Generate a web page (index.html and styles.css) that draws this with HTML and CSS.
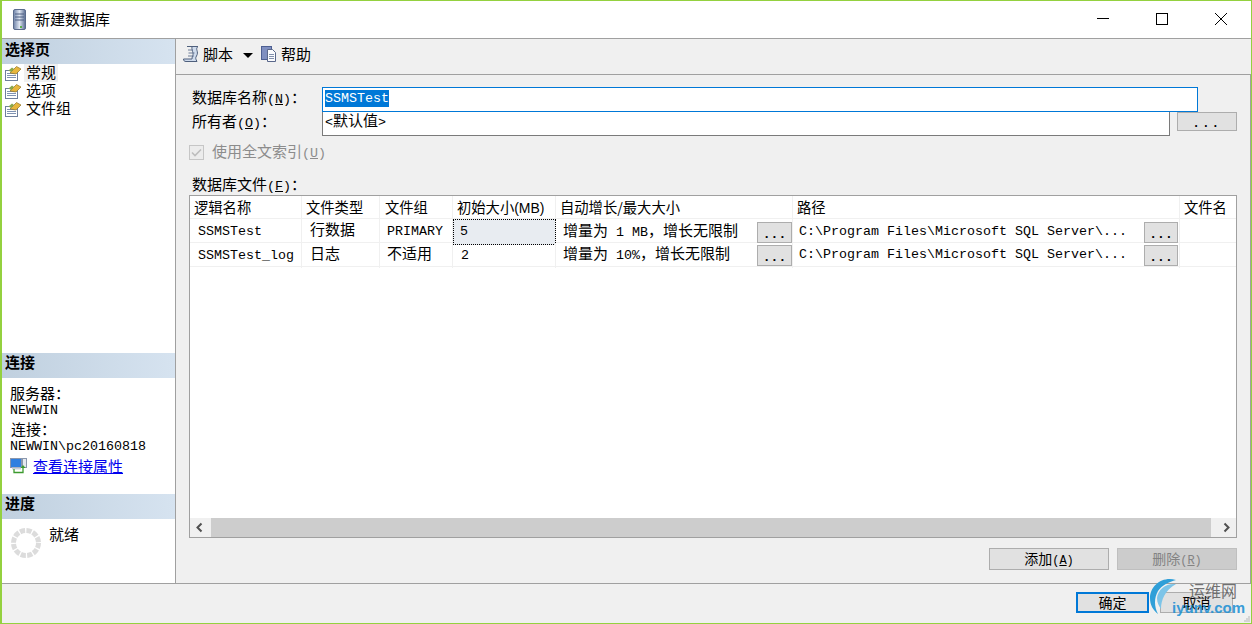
FILE: index.html
```html
<!DOCTYPE html>
<html lang="zh-CN">
<head>
<meta charset="utf-8">
<title>新建数据库</title>
<link rel="stylesheet" href="styles.css">
</head>
<body>
<div class="window">
  <header class="titlebar">
    <svg class="app-icon" width="13" height="21" viewBox="0 0 13 21"><defs><linearGradient id="srv" x1="0" x2="1" y1="0" y2="0"><stop offset="0" stop-color="#6f83a8"/><stop offset=".5" stop-color="#dfe6f2"/><stop offset="1" stop-color="#56698f"/></linearGradient></defs><rect x=".5" y=".5" width="12" height="20" rx="1.500" fill="url(#srv)" stroke="#5a6b8c"/><path d="M2 5h9M2 8h9M2 11h9" stroke="#4d5f82"/><rect x="7" y="17" width="2" height="2" fill="#5fb04f"/></svg>
    <span class="title">新建数据库</span>
    <div class="win-controls">
      <svg width="12" height="12" viewBox="0 0 12 12"><path d="M0 5.500h12" stroke="#000"/></svg>
      <svg width="12" height="12" viewBox="0 0 12 12"><rect x=".5" y=".5" width="11" height="11" fill="none" stroke="#000"/></svg>
      <svg width="12" height="12" viewBox="0 0 12 12"><path d="M0 0l12 12M12 0L0 12" stroke="#000"/></svg>
    </div>
  </header>

  <div class="body">
    <aside class="side">
      <h2 class="side-head">选择页</h2>
      <ul class="pages">
        <li class="page"><svg class="page-icon" width="16" height="15" viewBox="0 0 16 15"><use href="#pg"/></svg><span class="page-label current">常规</span></li>
        <li class="page"><svg class="page-icon" width="16" height="15" viewBox="0 0 16 15"><use href="#pg"/></svg><span class="page-label">选项</span></li>
        <li class="page"><svg class="page-icon" width="16" height="15" viewBox="0 0 16 15"><use href="#pg"/></svg><span class="page-label">文件组</span></li>
      </ul>
      <h2 class="side-head tight">连接</h2>
      <div class="conn">
        <div class="conn-label">服务器：</div>
        <div class="mono conn-val">NEWWIN</div>
        <div class="conn-label second">连接：</div>
        <div class="mono conn-val">NEWWIN\pc20160818</div>
        <div class="conn-link">
          <svg width="17" height="16" viewBox="0 0 17 16"><rect x=".5" y=".5" width="11" height="9" fill="#2f7fe0" stroke="#8a97ad"/><rect x="2" y="9.500" width="9" height="2" fill="#c9cfda"/><rect x="12.500" y=".5" width="4" height="9" fill="#e4e8ef" stroke="#8a97ad"/><path d="M4 11v3.500h9V9" fill="none" stroke="#3c9a2e" stroke-width="1.300"/><path d="M10.500 10l2.500-3 2.500 3z" fill="#3c9a2e"/></svg>
          <a class="link" href="#">查看连接属性</a>
        </div>
      </div>
      <h2 class="side-head tight">进度</h2>
      <div class="progress">
        <svg width="32" height="32" viewBox="0 0 32 32"><circle cx="16" cy="16" r="12.500" fill="none" stroke="#dcdcdc" stroke-width="5" stroke-dasharray="5.200 1.350"/></svg>
        <span class="progress-text">就绪</span>
      </div>
    </aside>

    <main class="main">
      <div class="toolbar">
        <svg width="16" height="16" viewBox="0 0 16 16"><path d="M4 .5h11c-1.500 1-1.500 2.500-1 4s.8 3.500-.5 5.500-.8 3 .5 5.500H3c-1.800 0-2.500-1-2.500-2.500h8.500c0-3 1.500-4 1-6S8.500 3 9 .5H4z" fill="#cfdbec" stroke="#4e5f7c"/><path d="M5 4h5M5.500 7h6M5 10h6" stroke="#6d7d98"/></svg>
        <span class="tool-text">脚本</span>
        <span class="caret"></span>
        <svg width="16" height="16" viewBox="0 0 16 16"><rect x=".5" y=".5" width="10" height="13" fill="#7f8fc0" stroke="#4d5f92"/><path d="M6.500 3.500h5l3 3v9h-8z" fill="#fafbfd" stroke="#59678a"/><path d="M8 8.500h5M8 10.500h5M8 12.500h5" stroke="#8290ad"/></svg>
        <span class="tool-text">帮助</span>
      </div>

      <div class="content">
        <div class="field">
          <label class="label">数据库名称<span class="mono">(<u>N</u>)</span>：</label>
          <div class="input active"><span class="mono selected">SSMSTest</span></div>
        </div>
        <div class="field">
          <label class="label">所有者<span class="mono">(<u>O</u>)</span>：</label>
          <div class="input owner"><span class="mono">&lt;</span>默认值<span class="mono">&gt;</span></div>
          <button class="btn browse" type="button">...</button>
        </div>
        <div class="check-row">
          <svg width="15" height="15" viewBox="0 0 15 15"><rect x=".5" y=".5" width="14" height="14" fill="#ececec" stroke="#c6c6c6"/><path d="M3 7.500l3 3 6-6" fill="none" stroke="#bdbdbd" stroke-width="1.600"/></svg>
          <span class="check-text">使用全文索引<span class="mono">(<u>U</u>)</span></span>
        </div>
        <div class="files-label">数据库文件<span class="mono">(<u>F</u>)</span>：</div>

        <div class="grid-box">
          <div class="grid-scroll">
            <div class="row head">
              <div class="cell">逻辑名称</div>
              <div class="cell">文件类型</div>
              <div class="cell head-group">文件组</div>
              <div class="cell">初始大小<span class="sans">(MB)</span></div>
              <div class="cell">自动增长/最大大小</div>
              <div class="cell">路径</div>
              <div class="cell">文件名</div>
            </div>
            <div class="row">
              <div class="cell pad mono">SSMSTest</div>
              <div class="cell pad">行数据</div>
              <div class="cell pad tight-pad mono">PRIMARY</div>
              <div class="cell pad focus mono">5</div>
              <div class="cell pad auto split"><span class="auto-text">增量为<span class="mono"> 1 MB</span>，增长无限制</span><button class="btn cell-btn" type="button">...</button></div>
              <div class="cell split path"><span class="mono path-text">C:\Program Files\Microsoft SQL Server\...</span><button class="btn cell-btn" type="button">...</button></div>
              <div class="cell"></div>
            </div>
            <div class="row">
              <div class="cell pad mono">SSMSTest_log</div>
              <div class="cell pad">日志</div>
              <div class="cell pad tight-pad">不适用</div>
              <div class="cell pad mono">2</div>
              <div class="cell pad auto split"><span class="auto-text">增量为<span class="mono"> 10%</span>，增长无限制</span><button class="btn cell-btn" type="button">...</button></div>
              <div class="cell split path"><span class="mono path-text">C:\Program Files\Microsoft SQL Server\...</span><button class="btn cell-btn" type="button">...</button></div>
              <div class="cell"></div>
            </div>
          </div>
          <div class="scrollbar">
            <svg class="arrow first" width="21" height="19" viewBox="0 0 21 19"><path d="M11.500 5.500L7.500 9.500l4 4" fill="none" stroke="#505050" stroke-width="2"/></svg>
            <div class="thumb"></div>
            <svg class="arrow" width="20" height="19" viewBox="0 0 20 19"><path d="M8.500 5.500l4 4-4 4" fill="none" stroke="#505050" stroke-width="2"/></svg>
          </div>
        </div>

        <div class="grid-actions">
          <button class="btn action" type="button">添加<span class="small-mono">(<u>A</u>)</span></button>
          <button class="btn action disabled" type="button">删除<span class="small-mono">(<u>R</u>)</span></button>
        </div>
      </div>
    </main>
  </div>

  <footer class="footer">
    <button class="btn dialog primary" type="button">确定</button>
    <button class="btn dialog" type="button">取消</button>
  </footer>

  <div class="watermark">
    <svg class="wm-arc" width="26" height="36" viewBox="0 0 26 36"><path d="M26 2C12-2 0 8 0 20c0 7 3 12 8 16C4 28 4 20 8 13 12 7 19 4 26 2z" fill="#2f9fd8"/><path d="M26 6C16 5 8 11 7 20c0 5 2 8 4 11 0-9 4-19 15-25z" fill="#7cc4e8"/></svg>
    <span class="wm-cn">运维网</span>
    <span class="wm-en">iyunv.com</span>
  </div>
  <svg class="grip" width="6" height="6" viewBox="0 0 6 6"><path d="M4 0h2v2H4zM2 2h2v2H2zM4 2h2v2H4zM0 4h2v2H0zM2 4h2v2H2zM4 4h2v2H4z" fill="#d4d4d4"/></svg>
</div>

<svg class="defs" width="0" height="0"><defs><g id="pg"><rect x=".5" y="4.500" width="12" height="10" fill="#fff" stroke="#6f7f9c"/><path d="M2 7.500h9M2 9.500h9M2 11.500h9" stroke="#7f92b3"/><path d="M5 7l6.500-6.500L16 3l-5 5z" fill="#e7b63d" stroke="#8f7426" stroke-width=".7"/><path d="M3.500 4.500L7 1.500 9 3 6 6z" fill="#8aa84a"/></g></defs></svg>
</body>
</html>
```

FILE: styles.css
```css
* { box-sizing: border-box; }
html, body { margin: 0; height: 100%; }
body {
  font-family: "Noto Sans CJK SC", "Liberation Sans", sans-serif;
  font-size: 15px;
  line-height: 18px;
  color: #000;
  background: #f0f0f0;
  overflow: hidden;
}
.mono { font-family: "Liberation Mono", "Noto Sans CJK SC", monospace; font-size: 13.33px; }
.sans { font-family: "Liberation Sans", sans-serif; font-size: 14px; }
.small-mono { font-family: "Liberation Mono", monospace; font-size: 12px; }
.defs { position: absolute; }

.window {
  position: relative;
  width: 1252px;
  height: 624px;
  display: flex;
  flex-direction: column;
  border: 1px solid #94d13f;
  border-left-width: 2px;
  background: #f0f0f0;
}

.titlebar {
  height: 37px;
  flex: none;
  display: flex;
  align-items: center;
  background: #fff;
  padding: 0 0 1px 11px;
}
.title { margin-left: 9px; margin-top: -1px; }
.win-controls {
  margin-left: auto;
  margin-right: 24px;
  display: flex;
  gap: 47px;
}

.body {
  flex: 1;
  min-height: 0;
  display: flex;
  border-top: 1px solid #a0a0a0;
  border-bottom: 1px solid #a0a0a0;
}

.side {
  width: 174px;
  flex: none;
  display: flex;
  flex-direction: column;
  background: #fff;
  border-right: 1px solid #a0a0a0;
}
.side-head {
  margin: 0;
  height: 25px;
  flex: none;
  padding: 1px 0 0 3px;
  font-size: 15px;
  font-weight: 700;
  line-height: 18px;
  background: linear-gradient(90deg, #c0d0df, #d6e3f0);
}
.side-head.tight { padding-top: 0; }
.pages {
  list-style: none;
  margin: 0;
  padding: 0;
  flex: 1;
}
.page {
  height: 18px;
  display: flex;
  align-items: stretch;
  padding-left: 3px;
}
.page-icon { flex: none; margin: 2px 3px 0 0; }
.page-label { padding: 0 2px; line-height: 16px; }
.current { background: #f0f0f0; }

.conn { height: 116px; flex: none; padding: 6px 0 0 8px; }
.conn-label { line-height: 16px; padding-top: 1px; margin-bottom: 2px; }
.conn-label.second { margin-top: 2px; padding-left: 1px; }
.conn-val { line-height: 15px; }
.conn-link { display: flex; align-items: center; gap: 6px; margin-top: 3px; }
.link { color: #0000ee; text-decoration: underline; }

.progress {
  height: 64px;
  flex: none;
  display: flex;
  align-items: flex-start;
  padding: 8px 0 0 8px;
}
.progress-text { margin: -2px 0 0 7px; }

.main { flex: 1; min-width: 0; display: flex; flex-direction: column; }
.toolbar {
  height: 36px;
  flex: none;
  display: flex;
  align-items: center;
  padding: 0 0 5px 7px;
  border-bottom: 1px solid #a0a0a0;
}
.tool-text { margin-left: 4px; }
.caret {
  width: 0;
  height: 0;
  margin: 2px 8px 0 10px;
  border-left: 5px solid transparent;
  border-right: 5px solid transparent;
  border-top: 5px solid #000;
}

.content {
  flex: 1;
  min-height: 0;
  display: flex;
  flex-direction: column;
  padding: 12px 13px 13px 13px;
  border-right: 1px solid #a0a0a0;
}
.field { display: flex; align-items: flex-start; height: 24px; padding-left: 3px; }
.label { width: 130px; flex: none; line-height: 20px; }
.input {
  height: 25px;
  background: #fff;
  border: 1px solid #7a7a7a;
  padding: 0 2px;
  line-height: 16px;
  flex: none;
}
.input.active { width: 876px; border-color: #0078d7; line-height: 18px; position: relative; z-index: 1; }
.input.owner { width: 848px; }
.selected { display: inline-block; line-height: 17px; background: #0078d7; color: #fff; vertical-align: 1px; }

.btn {
  border: 1px solid #adadad;
  background: #e1e1e1;
  color: #000;
  font: inherit;
  padding: 0;
}
.browse { width: 60px; height: 19px; margin: 1px 0 0 7px; font-family: "Liberation Mono", monospace; font-size: 12px; font-weight: 700; letter-spacing: 2.500px; line-height: 22px; }

.check-row { display: flex; align-items: center; gap: 8px; margin-top: 8px; height: 18px; color: #8c8c8c; }
.files-label { margin-top: 14px; padding-left: 3px; height: 18px; line-height: 18px; }

.grid-box {
  margin-top: 2px;
  flex: 1;
  min-height: 0;
  display: flex;
  flex-direction: column;
  background: #fff;
  border: 1px solid #a0a0a0;
}
.grid-scroll { flex: 1; min-height: 0; overflow: hidden; }
.row {
  display: grid;
  grid-template-columns: 112px 78px 73px 103px 237px 387px 57px;
  height: 24px;
  border-bottom: 1px solid #f0f0f0;
}
.row.head { height: 23px; font-size: 14.300px; }
.cell {
  padding-left: 4px;
  border-right: 1px solid #f0f0f0;
  white-space: nowrap;
  overflow: hidden;
  line-height: 22px;
}
.head-group { padding-left: 5px; }
.pad { padding-left: 8px; line-height: 20px; }
.tight-pad { padding-left: 7px; }
.cell.mono { line-height: 26px; }
.focus { background: #e8ecf1; outline: 1px dotted #000; outline-offset: -1px; overflow: visible; padding-left: 7px; }
.split { display: flex; align-items: center; justify-content: space-between; padding-right: 0; overflow: visible; }
.auto { padding-left: 7px; }
.auto-text { margin-bottom: 2px; }
.path { padding-left: 6px; }
.path-text { margin-bottom: 1px; }
.path .cell-btn { width: 34px; margin-right: 1px; }
.cell-btn {
  width: 35px;
  height: 21px;
  flex: none;
  font-family: "Liberation Mono", monospace;
  font-size: 13px;
  font-weight: 700;
  line-height: 24px;
  background: #e1e1e1;
  border-color: #adadad;
}
.scrollbar { height: 19px; flex: none; display: flex; background: #f0f0f0; }
.arrow { flex: none; }
.thumb { flex: 1; background: #cdcdcd; margin-right: 5px; }

.grid-actions { display: flex; justify-content: flex-end; gap: 8px; margin-top: 10px; }
.action { width: 120px; height: 22px; font-size: 14px; line-height: 16px; }
.disabled { background: #cccccc; border-color: #bfbfbf; color: #838383; }

.footer {
  height: 39px;
  flex: none;
  display: flex;
  justify-content: flex-end;
  gap: 11px;
  padding: 8px 18px 0 0;
}
.dialog { width: 73px; height: 21px; font-size: 14px; line-height: 17px; }
.primary { border: 2px solid #0078d7; }

.watermark {
  position: absolute;
  left: 1146px;
  top: 575px;
  width: 102px;
  height: 46px;
  pointer-events: none;
}
.wm-arc { position: absolute; left: 2px; top: 2px; }
.wm-cn { position: absolute; left: 41px; top: 5px; font-size: 16px; line-height: 18px; color: rgba(90, 90, 90, .85); white-space: nowrap; }
.wm-en { position: absolute; left: 24px; top: 21px; font-family: "Liberation Sans", sans-serif; font-size: 15px; line-height: 22px; font-weight: 700; color: rgba(32, 144, 212, .9); white-space: nowrap; }
.grip { position: absolute; right: 1px; bottom: 1px; }
```
